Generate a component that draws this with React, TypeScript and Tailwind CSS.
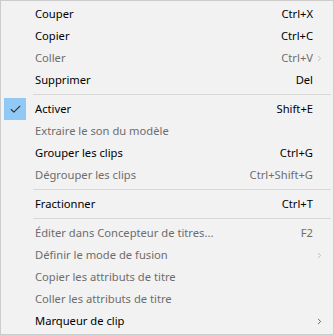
import { Check, ChevronRight } from 'lucide-react';

type Item =
  | { kind: 'sep' }
  | { kind: 'item'; label: string; shortcut?: string; disabled?: boolean; checked?: boolean; submenu?: boolean };

const items: Item[] = [
  { kind: 'item', label: 'Couper', shortcut: 'Ctrl+X' },
  { kind: 'item', label: 'Copier', shortcut: 'Ctrl+C' },
  { kind: 'item', label: 'Coller', shortcut: 'Ctrl+V', disabled: true, submenu: true },
  { kind: 'item', label: 'Supprimer', shortcut: 'Del' },
  { kind: 'sep' },
  { kind: 'item', label: 'Activer', shortcut: 'Shift+E', checked: true },
  { kind: 'item', label: 'Extraire le son du modèle', disabled: true },
  { kind: 'item', label: 'Grouper les clips', shortcut: 'Ctrl+G' },
  { kind: 'item', label: 'Dégrouper les clips', shortcut: 'Ctrl+Shift+G', disabled: true },
  { kind: 'sep' },
  { kind: 'item', label: 'Fractionner', shortcut: 'Ctrl+T' },
  { kind: 'sep' },
  { kind: 'item', label: 'Éditer dans Concepteur de titres...', shortcut: 'F2', disabled: true },
  { kind: 'item', label: 'Définir le mode de fusion', disabled: true, submenu: true },
  { kind: 'item', label: 'Copier les attributs de titre', disabled: true },
  { kind: 'item', label: 'Coller les attributs de titre', disabled: true },
  { kind: 'item', label: 'Marqueur de clip', submenu: true },
];

export default function App() {
  return (
    <div className="w-[334px] h-[335px] bg-white">
      <div
        className="w-[334px] h-[335px] border border-[#cccccc] bg-[#f2f2f2] p-[2px] text-[11.2px] leading-[22px]"
        style={{ fontFamily: '"Noto Sans", sans-serif' }}
      >
        {items.map((it, i) =>
          it.kind === 'sep' ? (
            <div key={i} className="h-[7px] flex items-center pl-[30px]">
              <div className="h-px w-full bg-[#d7d7d7]" />
            </div>
          ) : (
            <div key={i} className="h-[22px] flex items-center">
              <div className="w-[32px] flex items-center pl-[1px]">
                {it.checked && (
                  <div className="w-[22px] h-[22px] bg-[#90c8f6] flex items-center justify-center">
                    <Check size={13} strokeWidth={2} className="text-[#333]" />
                  </div>
                )}
              </div>
              <span className={`flex-1 ${it.disabled ? 'text-[#6d6d6d]' : 'text-black'}`}>{it.label}</span>
              <span className={`pr-[1px] ${it.disabled ? 'text-[#6d6d6d]' : 'text-black'}`}>{it.shortcut}</span>
              <div className="w-[10px] mr-[7px] flex items-center justify-center">
                {it.submenu && (
                  <ChevronRight size={9} strokeWidth={2} className={it.disabled ? 'text-[#b0b0b0]' : 'text-[#333]'} />
                )}
              </div>
            </div>
          )
        )}
      </div>
    </div>
  );
}
